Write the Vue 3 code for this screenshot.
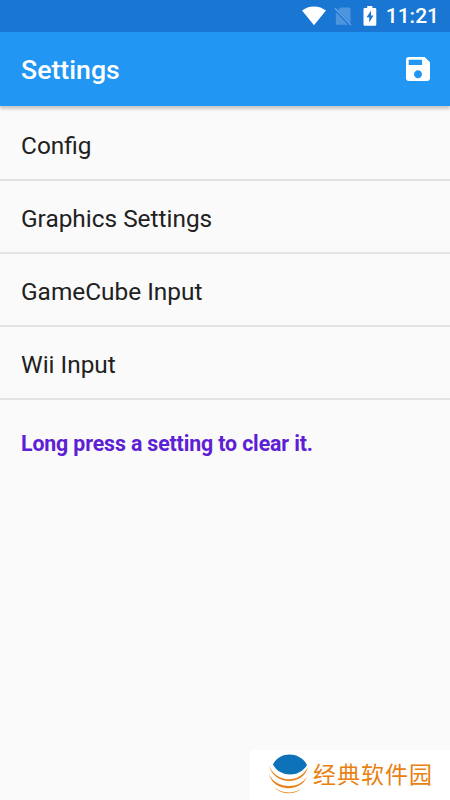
<script setup>
const items = ['Config', 'Graphics Settings', 'GameCube Input', 'Wii Input']
</script>

<template>
  <div class="screen">
    <div class="status">
      <svg class="wifi" width="24" height="20" viewBox="0 0 24 20">
        <path d="M12 19.2 0 4.6C3.2 1.9 7.3 .4 12 .4s8.8 1.5 12 4.2z" fill="#fff" />
      </svg>
      <svg class="sim" width="18" height="20" viewBox="0 0 18 20">
        <path d="M6.5 1.5H15q1.5 0 1.5 1.5V17L4 4zM1.8 6 14 18.7H3.3q-1.5 0-1.5-1.5z" fill="#4f95de" />
        <path d="M.8 2 17 19" stroke="#65a4e6" stroke-width="1.3" />
      </svg>
      <svg class="battery" width="14" height="20" viewBox="0 0 14 20">
        <path d="M4.2 0h5.2v2H12q1.3 0 1.3 1.3v15.2q0 1.3-1.3 1.3H1.8Q.5 19.8.5 18.5V3.3Q.5 2 1.8 2h2.4z" fill="#fff" />
        <path d="M8 4.7 3.5 11.2h2.7v5.3L10.5 9.5H8z" fill="#1976d2" />
      </svg>
      <span class="clock">11:21</span>
    </div>
    <header class="bar">
      <h1>Settings</h1>
      <svg class="save" width="32" height="32" viewBox="0 0 24 24">
        <path fill="#fff" d="M17 3H5c-1.11 0-2 .9-2 2v14c0 1.1.89 2 2 2h14c1.1 0 2-.9 2-2V7l-4-4zm-5 16c-1.66 0-3-1.34-3-3s1.34-3 3-3 3 1.34 3 3-1.34 3-3 3zm3-10H5V5h10v4z" />
      </svg>
    </header>
    <ul class="list">
      <li v-for="item in items" :key="item">{{ item }}</li>
    </ul>
    <p class="hint">Long press a setting to clear it.</p>
    <footer class="brand">
      <svg width="42" height="44" viewBox="0 0 42 44">
        <path d="M5 12.5C11-1 32-1 39 13 32 25.500 12 26 5 12.5z" fill="#0e72b9" />
        <g fill="#e9821d">
          <path d="M1 13C6 29 30 34 40 15 36 34 5 34 1 13z" />
          <path d="M1 22C7 36.500 31 38.500 39 24.5 33 41 5 40 1 22z" />
          <path d="M5 33.500C12 42 26 42.500 34 36 27 43.500 12 43.500 5 33.500z" />
        </g>
      </svg>
      <span>经典软件园</span>
    </footer>
  </div>
</template>

<style>
body {
  margin: 0;
}
</style>

<style scoped>
.screen {
  width: 450px;
  height: 800px;
  display: flex;
  flex-direction: column;
  overflow: hidden;
  background: #fafafa;
  font-family: Roboto, "Noto Sans CJK SC", sans-serif;
  color: #212121;
}
.status {
  height: 32px;
  flex: none;
  display: flex;
  align-items: center;
  justify-content: flex-end;
  box-sizing: border-box;
  padding-right: 11px;
  background: #1976d2;
}
.sim {
  margin-left: 8px;
}
.battery {
  margin-left: 11px;
}
.clock {
  margin-left: 9px;
  font-size: 21px;
  line-height: 32px;
  font-weight: 500;
  color: #fff;
}
.bar {
  height: 74px;
  flex: none;
  display: flex;
  align-items: center;
  justify-content: space-between;
  box-sizing: border-box;
  padding: 0 16px 0 21px;
  background: #2196f3;
  box-shadow: 0 3px 3px rgba(0, 0, 0, 0.2);
}
h1 {
  margin: 2px 0 0;
  font-size: 26.7px;
  line-height: 32px;
  font-weight: 500;
  color: #fff;
}
.list {
  margin: 0;
  padding: 2px 0 0;
  list-style: none;
}
.list li {
  height: 73px;
  box-sizing: border-box;
  padding: 2px 21px 0;
  border-bottom: 2px solid #e3e3e3;
  font-size: 24.4px;
  line-height: 72px;
}
.hint {
  margin: 30px 21px 0;
  font-size: 21.3px;
  line-height: 28px;
  font-weight: 700;
  letter-spacing: -0.12px;
  color: #5e20d4;
}
.brand {
  width: 200px;
  height: 50px;
  margin: auto 0 0 auto;
  display: flex;
  align-items: center;
  box-sizing: border-box;
  padding: 0 0 2px 18px;
  background: #fff;
  font-size: 23px;
  line-height: 32px;
  letter-spacing: 1px;
  color: #ea7f12;
}
.brand span {
  margin: 3px 0 0 3px;
}
</style>
